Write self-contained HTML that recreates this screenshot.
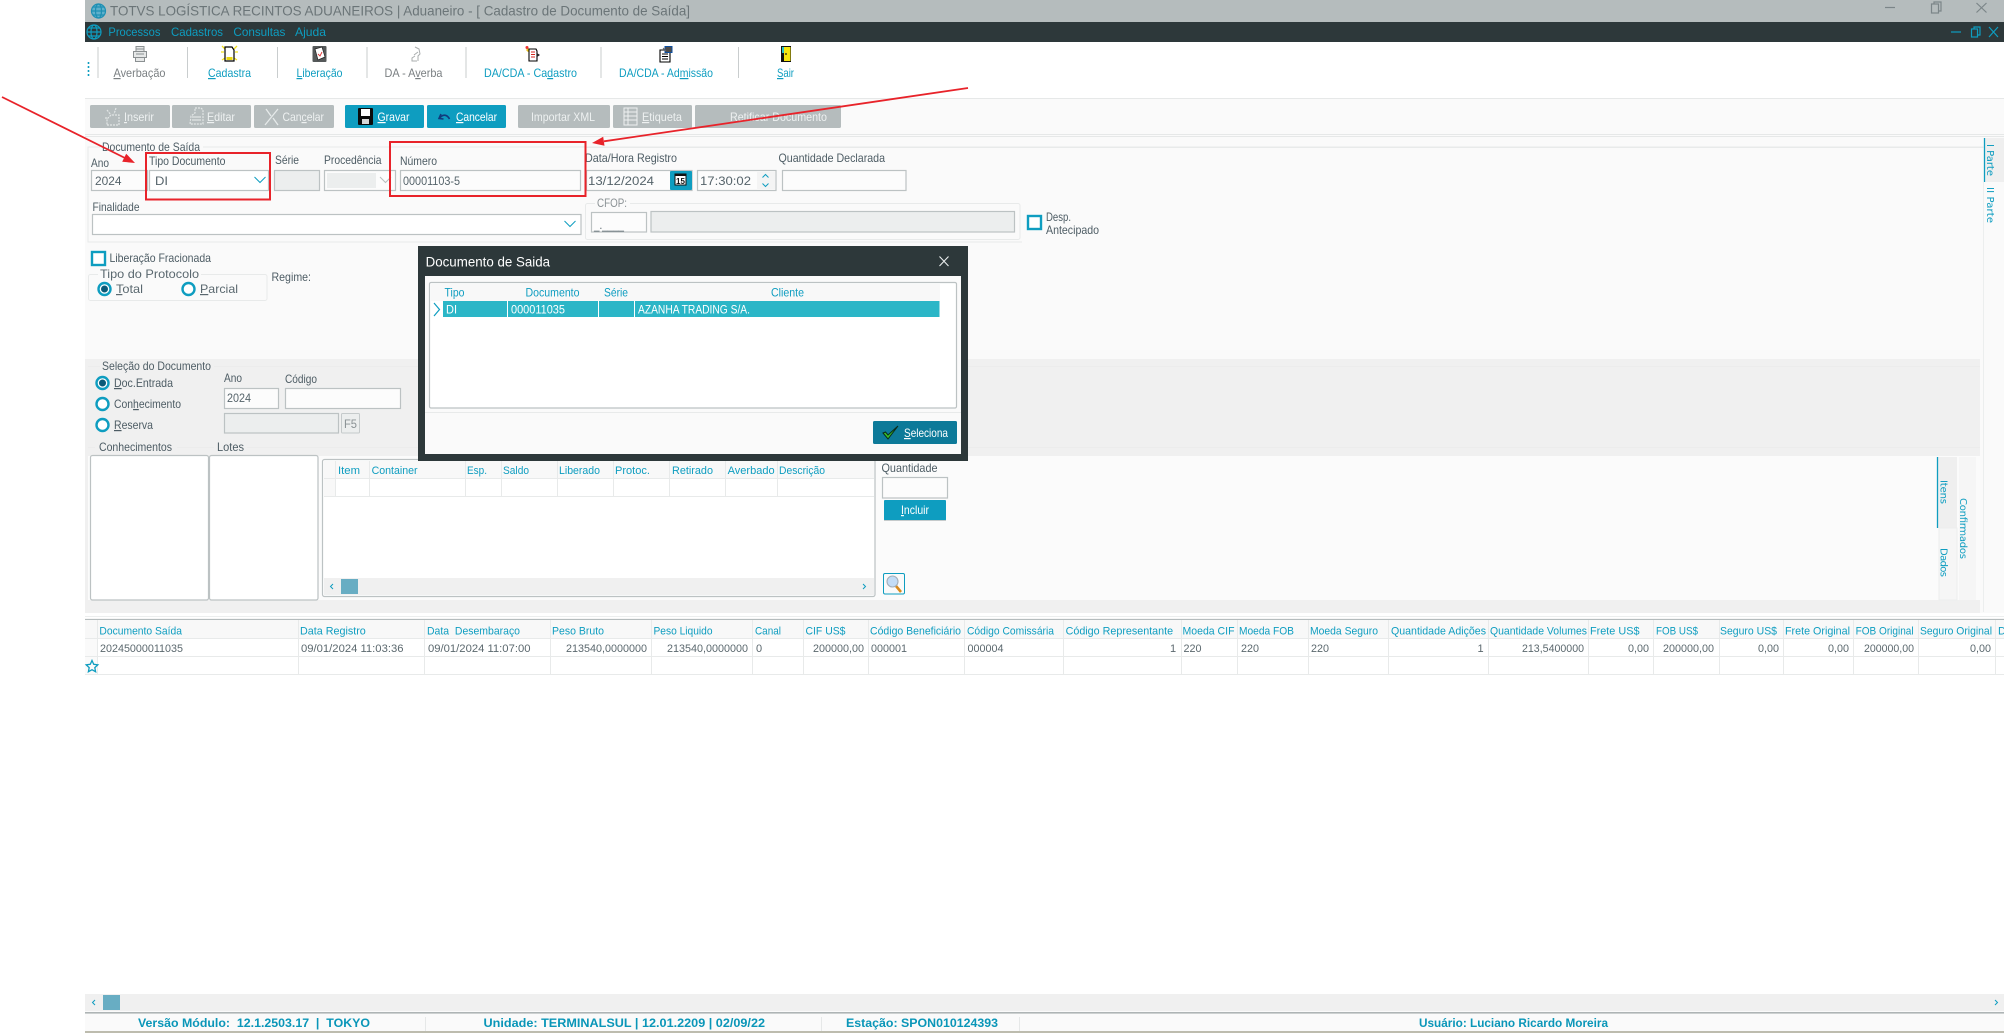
<!DOCTYPE html>
<html lang="pt-BR">
<head>
<meta charset="utf-8">
<title>Cadastro de Documento de Saída</title>
<style>
html,body{margin:0;padding:0;background:#fff;width:2004px;height:1033px;overflow:hidden}
svg{display:block;position:absolute;left:0;top:0}
text{font-family:"Liberation Sans",sans-serif;font-size:12px;white-space:pre}
.l{fill:#4d5c64}
.g{fill:#fff}
.b{fill:#0e9dc0}
.d{fill:#8a9194}
.f{font-size:11.5px;fill:#55636a}
.h{font-size:11px;fill:#0e9dc0}
.v{font-size:11px;fill:#5b686e}
.w{fill:#eef1f1}
.s{font-weight:bold;fill:#0a96b8;font-size:12px}
.r{font-family:"DejaVu Sans",sans-serif;font-size:10px;fill:#0e9dc0}
.bx{fill:#fcfcfc;stroke:#bcc2c3;stroke-width:1.2}
.dis{fill:#eceeee;stroke:#bcc2c3;stroke-width:1.2}
.ch{fill:none;stroke:#0e9dc0;stroke-width:1}
.gl{stroke:#e8eaea;stroke-width:1}
.rr{fill:#fff;stroke:#0e9dc0;stroke-width:2.4}
.red{fill:none;stroke:#e8232a;stroke-width:2}
</style>
</head>
<body>
<svg width="2004" height="1033" viewBox="0 0 2004 1033" xmlns="http://www.w3.org/2000/svg">
<rect width="2004" height="1033" fill="#fff"/>

<!-- title bar -->
<rect x="85" y="0" width="1919" height="22" fill="#b5bcbd"/>
<g fill="none" stroke="#1d8fb3" stroke-width="1.2"><circle cx="98.5" cy="11" r="7" fill="#5fb0cb"/><ellipse cx="98.5" cy="11" rx="3" ry="7"/><path d="M91.5 11h14M93 7h11M93 15h11"/></g>
<text x="110" y="15.5" style="font-size:14px;fill:#6b7578" textLength="580" lengthAdjust="spacingAndGlyphs">TOTVS LOGÍSTICA RECINTOS ADUANEIROS | Aduaneiro - [ Cadastro de Documento de Saída]</text>
<g fill="none" stroke="#7b8588" stroke-width="1.2"><path d="M1885 7.5h10"/><rect x="1931.5" y="4" width="7" height="9"/><path d="M1934 4v-2h7v9h-2"/><path d="M1976.500 3l10 9.500M1986.500 3l-10 9.500"/></g>

<!-- menu bar -->
<rect x="85" y="22" width="1919" height="20" fill="#2d383a"/>
<g fill="none" stroke="#0e9dc0" stroke-width="1.2"><circle cx="94" cy="32" r="7"/><ellipse cx="94" cy="32" rx="3" ry="7"/><path d="M87 32h14M88.5 28h11M88.500 36h11"/></g>
<text class="b" x="108.400" y="36" textLength="52" lengthAdjust="spacingAndGlyphs">Processos</text>
<text class="b" x="171" y="36" textLength="52" lengthAdjust="spacingAndGlyphs">Cadastros</text>
<text class="b" x="233.400" y="36" textLength="52" lengthAdjust="spacingAndGlyphs">Consultas</text>
<text class="b" x="295" y="36" textLength="31" lengthAdjust="spacingAndGlyphs">Ajuda</text>
<g fill="none" stroke="#0e9dc0" stroke-width="1.2"><path d="M1951 32h10"/><rect x="1971.500" y="29" width="6" height="8"/><path d="M1974 29v-2h6v8h-2"/><path d="M1989 27l9 10M1998 27l-9 10"/></g>

<!-- toolbar -->
<path d="M88.500 62v16" stroke="#0e9dc0" stroke-width="1.600" stroke-dasharray="2 2"/>
<g stroke="#c9cdce" stroke-width="1"><path d="M98 47v31M187.500 47v31M277.500 47v31M367 47v31M466 47v31M601 47v31M738.500 47v31"/></g>
<text x="113.500" y="77" style="fill:#7a7f82" textLength="52" lengthAdjust="spacingAndGlyphs"><tspan text-decoration="underline">A</tspan>verbação</text>
<text class="b" x="208" y="77" textLength="43" lengthAdjust="spacingAndGlyphs"><tspan text-decoration="underline">C</tspan>adastra</text>
<text class="b" x="296.500" y="77" textLength="46" lengthAdjust="spacingAndGlyphs"><tspan text-decoration="underline">L</tspan>iberação</text>
<text x="384.500" y="77" style="fill:#7a7f82" textLength="58" lengthAdjust="spacingAndGlyphs">DA - A<tspan text-decoration="underline">v</tspan>erba</text>
<text class="b" x="484" y="77" textLength="93" lengthAdjust="spacingAndGlyphs">DA/CDA - Ca<tspan text-decoration="underline">d</tspan>astro</text>
<text class="b" x="619" y="77" textLength="94" lengthAdjust="spacingAndGlyphs">DA/CDA - Ad<tspan text-decoration="underline">m</tspan>issão</text>
<text class="b" x="777" y="77" textLength="17" lengthAdjust="spacingAndGlyphs"><tspan text-decoration="underline">S</tspan>air</text>

<!-- toolbar icons -->
<g fill="#e6e8e8" stroke="#8b9092" stroke-width="1"><rect x="136" y="46.500" width="8" height="5"/><rect x="133.500" y="51.500" width="13" height="6"/><rect x="135.500" y="57.500" width="9" height="4"/><path d="M136 49h8M136 54h8" fill="none"/></g>
<g><path d="M222 46l3 3M237 46l-3 3M222 60l3-2M237 60l-3-2M221 52h3M238 52h-3" stroke="#f3e21c" stroke-width="1.300"/><path d="M225 47h7l2 3v11h-9z" fill="#fff" stroke="#000" stroke-width="1.200"/><rect x="226.500" y="57" width="6" height="3" fill="#e8d60f"/></g>
<g><rect x="312.500" y="46" width="14" height="16" rx="1" fill="#55595a"/><path d="M315 49l7-2 3 10-7 3z" fill="#fff" stroke="#222" stroke-width=".7"/><path d="M318 54l2 2 2-4" stroke="#d33" fill="none" stroke-width=".9"/></g>
<g fill="none" stroke="#a9adae" stroke-width="1"><path d="M415 47l4 2 1 5-2 2v5M415 56l-3 2v3h5M418 52l-4 3"/></g>
<g><path d="M528 48l3 2-3 2-2-2z" fill="#e9c21b"/><path d="M529 49h7l1 2v10h-8z" fill="#fff" stroke="#000" stroke-width="1.100"/><path d="M531 52h4M531 54.500h4M531 57h4" stroke="#d6281f"/><path d="M537 53l3 2-3 2z" fill="#222"/><circle cx="527" cy="47.500" r="1.500" fill="#e33"/></g>
<g><path d="M660 50h10v12h-10z" fill="#fff" stroke="#000" stroke-width="1.100"/><path d="M662 54h6M662 56.500h6M662 59h6" stroke="#000"/><rect x="665" y="46.500" width="7" height="6" fill="#4c4c4c" stroke="#0e4fa0"/><path d="M663 48l3 3" stroke="#666"/></g>
<g><rect x="781" y="46" width="10" height="16" fill="#111"/><rect x="784" y="47" width="6.500" height="14" fill="#f5e50f"/><rect x="782" y="47" width="2" height="6" fill="#27c0c4"/><circle cx="786" cy="54" r=".9" fill="#111"/></g>

<!-- band -->
<rect x="85" y="98" width="1919" height="935" fill="#fafafa"/>
<path d="M85 98.500h1919M85 134.500h1919M85 136.500h1919" stroke="#e6e8e8"/>

<!-- action buttons -->
<g fill="#b5bcbd"><rect x="90" y="105" width="80" height="23" rx="1.500"/><rect x="172" y="105" width="79" height="23" rx="1.500"/><rect x="254" y="105" width="80" height="23" rx="1.500"/><rect x="518" y="105" width="92" height="23" rx="1.500"/><rect x="613" y="105" width="79" height="23" rx="1.500"/><rect x="695" y="105" width="146" height="23" rx="1.500"/></g>
<g fill="#0e9dc0"><rect x="345" y="105" width="79" height="23" rx="1.500"/><rect x="427" y="105" width="79" height="23" rx="1.500"/></g>
<text class="w" x="124" y="121" textLength="30" lengthAdjust="spacingAndGlyphs"><tspan text-decoration="underline">I</tspan>nserir</text>
<text class="w" x="207" y="121" textLength="28" lengthAdjust="spacingAndGlyphs"><tspan text-decoration="underline">E</tspan>ditar</text>
<text class="w" x="282.500" y="121" textLength="41.500" lengthAdjust="spacingAndGlyphs">Can<tspan text-decoration="underline">c</tspan>elar</text>
<text class="g" x="377.500" y="121" textLength="32" lengthAdjust="spacingAndGlyphs"><tspan text-decoration="underline">G</tspan>ravar</text>
<text class="g" x="456" y="121" textLength="41" lengthAdjust="spacingAndGlyphs"><tspan text-decoration="underline">C</tspan>ancelar</text>
<text class="w" x="531" y="121" textLength="64" lengthAdjust="spacingAndGlyphs">Importar XML</text>
<text class="w" x="642" y="121" textLength="40" lengthAdjust="spacingAndGlyphs"><tspan text-decoration="underline">E</tspan>tiqueta</text>
<text class="w" x="730" y="121" textLength="97" lengthAdjust="spacingAndGlyphs">Retificar Documento</text>
<!-- button icons -->
<g fill="none" stroke="#e2e6e6" stroke-width="1.200"><path d="M107 110l4 5M116 108l-2 6M105 118h3M107 125h12v-10h-8l-4 4z" stroke-dasharray="2 1"/></g>
<g fill="none" stroke="#e2e6e6" stroke-width="1.200"><path d="M195 108h6l2 2v14h-13l1-8 4-3z" stroke-dasharray="2 1"/><path d="M192 117h9M192 120h9"/></g>
<g fill="none" stroke="#e6eaea" stroke-width="1.300"><path d="M265 125l13-16M266 109l5 7M273 118l5 7"/></g>
<g><rect x="358" y="108" width="15" height="17" rx="1" fill="#0b0b0b"/><rect x="361" y="109" width="9" height="7" fill="#fff"/><rect x="362" y="119" width="7" height="5" fill="#d8d8d8"/></g>
<g fill="none" stroke="#123a7c" stroke-width="1.600"><path d="M441 114l-2 4.500 4.500.5"/><path d="M439.500 118.500c2.500-4 7-5 10 .5"/></g>
<g fill="#d7dcdc" stroke="#eef1f1" stroke-width="1"><rect x="624" y="108" width="13" height="17" fill="none"/><path d="M624 112h13M624 116h13M624 120h13M628 108v17"/></g>

<!-- Documento de Saída fieldset -->
<rect x="88" y="147" width="1895" height="95" fill="none" stroke="#e8eaea"/>
<rect x="1022" y="148" width="965" height="120" fill="#fafafa"/>
<path d="M586 147.500h1397" stroke="#e8eaea"/>
<rect x="100" y="140" width="103" height="14" fill="#fafafa"/>
<text class="l" x="102" y="151" textLength="98" lengthAdjust="spacingAndGlyphs">Documento de Saída</text>

<text class="l" x="91" y="167" textLength="18" lengthAdjust="spacingAndGlyphs">Ano</text>
<rect class="bx" x="91.500" y="170.500" width="56" height="20"/>
<text class="f" x="95" y="185" textLength="26.500" lengthAdjust="spacingAndGlyphs">2024</text>

<rect class="bx" x="149.500" y="170.500" width="119" height="20" style="fill:#fff"/>
<text class="l" x="149" y="165" textLength="76.500" lengthAdjust="spacingAndGlyphs">Tipo Documento</text>
<text class="f" x="155" y="185" textLength="13" lengthAdjust="spacingAndGlyphs">DI</text>
<path class="ch" d="M254.500 177l5.500 5.500 5.500-5.500"/>

<text class="l" x="275" y="164" textLength="24" lengthAdjust="spacingAndGlyphs">Série</text>
<rect class="dis" x="274.500" y="170.500" width="45" height="20"/>

<text class="l" x="324" y="164" textLength="57.500" lengthAdjust="spacingAndGlyphs">Procedência</text>
<rect class="bx" x="324.500" y="170.500" width="71" height="20"/>
<rect x="327" y="173" width="49" height="15" fill="#eceeee"/>
<path d="M380 177l5.500 5.500 5.500-5.500" fill="none" stroke="#b8bdbe"/>

<text class="l" x="400" y="165" textLength="37" lengthAdjust="spacingAndGlyphs">Número</text>
<rect class="bx" x="400.500" y="170.500" width="180" height="20"/>
<text class="f" x="403" y="185" textLength="57" lengthAdjust="spacingAndGlyphs">00001103-5</text>

<text class="l" x="585" y="162" textLength="92" lengthAdjust="spacingAndGlyphs">Data/Hora Registro</text>
<rect class="bx" x="586.500" y="170.500" width="105.500" height="20"/>
<text class="f" x="588" y="185" textLength="66" lengthAdjust="spacingAndGlyphs">13/12/2024</text>
<rect x="670" y="171" width="22" height="19" fill="#0e9dc0" rx="1"/>
<rect x="675" y="174" width="11" height="11" fill="#fff" stroke="#111" stroke-width="1"/>
<rect x="675" y="174" width="11" height="2" fill="#111"/>
<text x="676" y="184" style="font-size:8px;font-weight:bold;fill:#111" textLength="9">15</text>

<rect class="bx" x="697.500" y="170.500" width="78.500" height="20"/>
<text class="f" x="700" y="185" textLength="51" lengthAdjust="spacingAndGlyphs">17:30:02</text>
<rect x="757" y="172" width="18" height="17" fill="#f4f4f4"/>
<path class="ch" d="M762.500 177.500l3-3 3 3M762.500 183.500l3 3 3-3"/>

<text class="l" x="778.500" y="162" textLength="106.500" lengthAdjust="spacingAndGlyphs">Quantidade Declarada</text>
<rect class="bx" x="782.500" y="170.500" width="123.500" height="20"/>

<text class="l" x="92.500" y="211" textLength="47" lengthAdjust="spacingAndGlyphs">Finalidade</text>
<rect class="bx" x="92.500" y="214.500" width="488.500" height="20" style="fill:#fff"/>
<path class="ch" d="M564.500 221l5.500 5.500 5.500-5.500"/>

<rect x="585.500" y="203.500" width="434.500" height="36" rx="2" fill="#fafafa" stroke="#e8eaea"/>
<rect x="595" y="198" width="35" height="11" fill="#fafafa"/>
<text class="d" x="597" y="207" textLength="30" lengthAdjust="spacingAndGlyphs">CFOP:</text>
<rect class="bx" x="591.500" y="212.500" width="55" height="19.500"/>
<text class="f" x="594" y="229" textLength="30" lengthAdjust="spacingAndGlyphs">_.____</text>
<rect class="dis" x="651" y="211.500" width="363.500" height="20.500"/>

<rect x="1028" y="216" width="13" height="13" fill="#fff" stroke="#0e9dc0" stroke-width="2.400"/>
<text class="l" x="1046" y="221" textLength="25" lengthAdjust="spacingAndGlyphs">Desp.</text>
<text class="l" x="1046" y="234" textLength="53" lengthAdjust="spacingAndGlyphs">Antecipado</text>

<!-- right main tabs -->
<rect x="1984" y="138" width="20" height="44" fill="#efefef"/>
<path d="M1984.500 138v44" stroke="#0e9dc0" stroke-width="1.300"/>
<path d="M1983.500 182v430" stroke="#eceeee"/>
<text class="r" transform="translate(1987,144) rotate(90)" textLength="32">I Parte</text>
<text class="r" transform="translate(1987,187) rotate(90)" textLength="36">II Parte</text>

<!-- Liberação / protocolo -->
<rect x="92" y="252" width="13" height="13" fill="#fff" stroke="#0e9dc0" stroke-width="2.400"/>
<text class="l" x="109.500" y="262" textLength="101.500" lengthAdjust="spacingAndGlyphs">Liberação Fracionada</text>
<rect x="88.500" y="274.500" width="178.500" height="26" rx="2" fill="none" stroke="#e8eaea"/>
<rect x="98" y="268" width="103" height="12" fill="#fafafa"/>
<text x="100" y="278" style="fill:#5a686f" textLength="99" lengthAdjust="spacingAndGlyphs">Tipo do Protocolo</text>
<circle class="rr" cx="104.500" cy="289" r="6"/><circle cx="104.500" cy="289" r="3.500" fill="#0a5a78"/>
<text x="116" y="293" style="fill:#5a686f" textLength="27" lengthAdjust="spacingAndGlyphs"><tspan text-decoration="underline">T</tspan>otal</text>
<circle class="rr" cx="188.500" cy="289" r="6"/>
<text x="200" y="293" style="fill:#5a686f" textLength="38" lengthAdjust="spacingAndGlyphs"><tspan text-decoration="underline">P</tspan>arcial</text>
<text class="l" x="271.500" y="281" textLength="39.500" lengthAdjust="spacingAndGlyphs">Regime:</text>

<!-- gray selection area -->
<rect x="85" y="359" width="1895" height="254" fill="#f0f0f0"/>
<path d="M88 366.500h1892M88 447.500h1892" stroke="#ececec"/>
<rect x="88" y="456" width="1892" height="144" fill="#fbfbfb"/>
<rect x="100" y="360" width="114" height="12" fill="#f0f0f0"/>
<text class="l" x="102" y="370" textLength="109" lengthAdjust="spacingAndGlyphs">Seleção do Documento</text>
<circle class="rr" cx="102.500" cy="383" r="6"/><circle cx="102.500" cy="383" r="3.500" fill="#0a5a78"/>
<text class="l" x="114" y="387" textLength="59" lengthAdjust="spacingAndGlyphs"><tspan text-decoration="underline">D</tspan>oc.Entrada</text>
<circle class="rr" cx="102.500" cy="404" r="6"/>
<text class="l" x="114" y="408" textLength="67" lengthAdjust="spacingAndGlyphs">Con<tspan text-decoration="underline">h</tspan>ecimento</text>
<circle class="rr" cx="102.500" cy="425" r="6"/>
<text class="l" x="114" y="429" textLength="39" lengthAdjust="spacingAndGlyphs"><tspan text-decoration="underline">R</tspan>eserva</text>
<text class="l" x="224" y="382" textLength="18" lengthAdjust="spacingAndGlyphs">Ano</text>
<text class="l" x="285" y="383" textLength="32" lengthAdjust="spacingAndGlyphs">Código</text>
<rect class="bx" x="224.500" y="388.500" width="54" height="20"/>
<text class="f" x="227" y="402" textLength="24" lengthAdjust="spacingAndGlyphs">2024</text>
<rect class="bx" x="285.500" y="388.500" width="115" height="20"/>
<rect class="dis" x="224.500" y="413.500" width="114" height="19.500"/>
<rect x="341.500" y="413.500" width="18" height="19.500" rx="1" fill="#eceeee" stroke="#c5cacb"/>
<text class="d" x="344" y="428" textLength="13" lengthAdjust="spacingAndGlyphs">F5</text>
<rect x="95" y="441" width="82" height="12" fill="#f0f0f0"/><rect x="214" y="441" width="33" height="12" fill="#f0f0f0"/>
<text class="l" x="99" y="451" textLength="73" lengthAdjust="spacingAndGlyphs">Conhecimentos</text>
<text class="l" x="217" y="451" textLength="27" lengthAdjust="spacingAndGlyphs">Lotes</text>
<rect x="90.500" y="455.500" width="118" height="144.500" rx="2" fill="#fff" stroke="#bcc2c3" stroke-width="1.200"/>
<rect x="209.500" y="455.500" width="108.500" height="144.500" rx="2" fill="#fff" stroke="#bcc2c3" stroke-width="1.200"/>

<!-- items grid -->
<rect x="322.500" y="459.500" width="552.500" height="137" rx="2" fill="#fff" stroke="#bcc2c3" stroke-width="1.200"/>
<rect x="324" y="461" width="550" height="17" fill="#f8f8f8"/>
<rect x="324" y="479" width="12" height="17" fill="#f8f8f8"/>
<path class="gl" d="M324 478.500h550M324 496.500h550M335.500 461v35M369.500 461v35M465.500 461v35M501.500 461v35M557.500 461v35M613.500 461v35M669.500 461v35M725.500 461v35M777.500 461v35"/>
<text class="h" x="338" y="474" textLength="22" lengthAdjust="spacingAndGlyphs">Item</text>
<text class="h" x="371.600" y="474" textLength="46" lengthAdjust="spacingAndGlyphs">Container</text>
<text class="h" x="467" y="474" textLength="20" lengthAdjust="spacingAndGlyphs">Esp.</text>
<text class="h" x="503" y="474" textLength="26" lengthAdjust="spacingAndGlyphs">Saldo</text>
<text class="h" x="559" y="474" textLength="41" lengthAdjust="spacingAndGlyphs">Liberado</text>
<text class="h" x="615" y="474" textLength="35" lengthAdjust="spacingAndGlyphs">Protoc.</text>
<text class="h" x="672" y="474" textLength="41" lengthAdjust="spacingAndGlyphs">Retirado</text>
<text class="h" x="727.600" y="474" textLength="47" lengthAdjust="spacingAndGlyphs">Averbado</text>
<text class="h" x="779" y="474" textLength="46" lengthAdjust="spacingAndGlyphs">Descrição</text>
<rect x="324" y="578" width="550" height="17" fill="#f0f0f0"/>
<rect x="341" y="579" width="17" height="15" fill="#68adc3"/>
<path class="ch" d="M333 584l-2.500 2.500 2.500 2.500M863 584l2.500 2.500-2.500 2.500"/>

<text class="l" x="881.500" y="472" textLength="56" lengthAdjust="spacingAndGlyphs">Quantidade</text>
<rect class="bx" x="882.500" y="477.500" width="65" height="20.500"/>
<rect x="884" y="500" width="62" height="20.500" rx="1" fill="#0e9dc0"/>
<path d="M884 520.500h62" stroke="#c5cacb" stroke-width="1"/>
<text class="g" x="901" y="514" textLength="28" lengthAdjust="spacingAndGlyphs"><tspan text-decoration="underline">I</tspan>ncluir</text>
<rect x="883.500" y="573.500" width="21" height="20.500" rx="1.500" fill="#fafafa" stroke="#0e9dc0" stroke-width="1"/>
<path d="M896 586l5 6" stroke="#d88a1c" stroke-width="2.600"/>
<circle cx="892.500" cy="581.500" r="5.500" fill="#c3dcf5" stroke="#a3aeb8" stroke-width="1.100"/>

<!-- inner tabs -->
<rect x="1937" y="457" width="20" height="71" fill="#efefef"/>
<path d="M1937.500 457v71" stroke="#0e9dc0" stroke-width="1.300"/>
<rect x="1939" y="528" width="18" height="72" fill="#f6f6f6" stroke="#eceeee"/>
<rect x="1959" y="457" width="17" height="143" fill="#f6f6f6"/>
<text class="r" transform="translate(1940.500,480) rotate(90)" textLength="24">Itens</text>
<text class="r" transform="translate(1940.500,548) rotate(90)" textLength="29">Dados</text>
<text class="r" transform="translate(1960,498) rotate(90)" textLength="61">Confirmados</text>

<!-- main grid -->
<rect x="85" y="613" width="1919" height="381" fill="#fff"/>
<path d="M85 616.500h1919" stroke="#eceeee"/>
<path d="M85 619.500h1919" stroke="#b5bcbd" stroke-width="1.300"/>
<rect x="85" y="620" width="1919" height="18" fill="#f8f8f8"/>
<rect x="85" y="638" width="12" height="36" fill="#fafafa"/>
<path class="gl" d="M85 638.500h1919M85 656.500h1919M85 674.500h1919"/>
<path class="gl" d="M97.500 620v54M298.500 620v54M424.500 620v54M550.500 620v54M651.500 620v54M752.500 620v54M803.500 620v54M868.500 620v54M964.500 620v54M1063.500 620v54M1181.500 620v54M1237.500 620v54M1308.500 620v54M1388.500 620v54M1488.500 620v54M1588.500 620v54M1653.500 620v54M1719.500 620v54M1783.500 620v54M1853.500 620v54M1918.500 620v54M1995.500 620v54"/>
<text class="h" x="99.400" y="634.500" textLength="82.600" lengthAdjust="spacingAndGlyphs">Documento Saída</text>
<text class="h" x="300" y="634.500" textLength="65.800" lengthAdjust="spacingAndGlyphs">Data Registro</text>
<text class="h" x="427" y="634.500" textLength="93" lengthAdjust="spacingAndGlyphs">Data  Desembaraço</text>
<text class="h" x="552" y="634.500" textLength="52" lengthAdjust="spacingAndGlyphs">Peso Bruto</text>
<text class="h" x="653.500" y="634.500" textLength="59" lengthAdjust="spacingAndGlyphs">Peso Liquido</text>
<text class="h" x="755" y="634.500" textLength="26" lengthAdjust="spacingAndGlyphs">Canal</text>
<text class="h" x="805.500" y="634.500" textLength="40" lengthAdjust="spacingAndGlyphs">CIF US$</text>
<text class="h" x="870" y="634.500" textLength="91" lengthAdjust="spacingAndGlyphs">Código Beneficiário</text>
<text class="h" x="967" y="634.500" textLength="87" lengthAdjust="spacingAndGlyphs">Código Comissária</text>
<text class="h" x="1065.600" y="634.500" textLength="107.500" lengthAdjust="spacingAndGlyphs">Código Representante</text>
<text class="h" x="1182.500" y="634.500" textLength="52" lengthAdjust="spacingAndGlyphs">Moeda CIF</text>
<text class="h" x="1239" y="634.500" textLength="55" lengthAdjust="spacingAndGlyphs">Moeda FOB</text>
<text class="h" x="1310" y="634.500" textLength="68" lengthAdjust="spacingAndGlyphs">Moeda Seguro</text>
<text class="h" x="1391" y="634.500" textLength="95" lengthAdjust="spacingAndGlyphs">Quantidade Adições</text>
<text class="h" x="1490" y="634.500" textLength="97" lengthAdjust="spacingAndGlyphs">Quantidade Volumes</text>
<text class="h" x="1590" y="634.500" textLength="49.500" lengthAdjust="spacingAndGlyphs">Frete US$</text>
<text class="h" x="1656" y="634.500" textLength="42" lengthAdjust="spacingAndGlyphs">FOB US$</text>
<text class="h" x="1720" y="634.500" textLength="57" lengthAdjust="spacingAndGlyphs">Seguro US$</text>
<text class="h" x="1785" y="634.500" textLength="65" lengthAdjust="spacingAndGlyphs">Frete Original</text>
<text class="h" x="1855.600" y="634.500" textLength="58" lengthAdjust="spacingAndGlyphs">FOB Original</text>
<text class="h" x="1920" y="634.500" textLength="72" lengthAdjust="spacingAndGlyphs">Seguro Original</text>
<text class="h" x="1998" y="634.500">D</text>

<text class="v" x="100" y="652" textLength="83" lengthAdjust="spacingAndGlyphs">20245000011035</text>
<text class="v" x="301" y="652" textLength="102.500" lengthAdjust="spacingAndGlyphs">09/01/2024 11:03:36</text>
<text class="v" x="428" y="652" textLength="102.500" lengthAdjust="spacingAndGlyphs">09/01/2024 11:07:00</text>
<text class="v" x="566" y="652" textLength="81" lengthAdjust="spacingAndGlyphs">213540,0000000</text>
<text class="v" x="667" y="652" textLength="81" lengthAdjust="spacingAndGlyphs">213540,0000000</text>
<text class="v" x="756" y="652">0</text>
<text class="v" x="813" y="652" textLength="51" lengthAdjust="spacingAndGlyphs">200000,00</text>
<text class="v" x="871" y="652" textLength="36" lengthAdjust="spacingAndGlyphs">000001</text>
<text class="v" x="967.500" y="652" textLength="36" lengthAdjust="spacingAndGlyphs">000004</text>
<text class="v" x="1170" y="652">1</text>
<text class="v" x="1183.500" y="652" textLength="18" lengthAdjust="spacingAndGlyphs">220</text>
<text class="v" x="1241" y="652" textLength="18" lengthAdjust="spacingAndGlyphs">220</text>
<text class="v" x="1311" y="652" textLength="18" lengthAdjust="spacingAndGlyphs">220</text>
<text class="v" x="1477.500" y="652">1</text>
<text class="v" x="1522" y="652" textLength="62" lengthAdjust="spacingAndGlyphs">213,5400000</text>
<text class="v" x="1628" y="652" textLength="21" lengthAdjust="spacingAndGlyphs">0,00</text>
<text class="v" x="1663" y="652" textLength="51" lengthAdjust="spacingAndGlyphs">200000,00</text>
<text class="v" x="1758" y="652" textLength="21" lengthAdjust="spacingAndGlyphs">0,00</text>
<text class="v" x="1828" y="652" textLength="21" lengthAdjust="spacingAndGlyphs">0,00</text>
<text class="v" x="1864" y="652" textLength="50" lengthAdjust="spacingAndGlyphs">200000,00</text>
<text class="v" x="1970" y="652" textLength="21" lengthAdjust="spacingAndGlyphs">0,00</text>
<path d="M92 660.500l1.700 3.800 4.100.5-3 2.800.8 4.100-3.600-2-3.600 2 .8-4.100-3-2.800 4.100-.5z" fill="none" stroke="#0e9dc0" stroke-width="1.300"/>

<!-- bottom scrollbar and status -->
<rect x="85" y="994" width="1919" height="17" fill="#f0f0f0"/>
<rect x="103" y="995" width="17" height="15" fill="#68adc3"/>
<path class="ch" d="M95 1000l-2.500 2.500 2.500 2.500M1995 1000l2.500 2.500-2.500 2.500"/>
<rect x="85" y="1012" width="1919" height="1.600" fill="#aeb4b5"/>
<rect x="85" y="1014" width="1919" height="17" fill="#fafafa"/>
<rect x="85" y="1031" width="1919" height="2" fill="#bdbcae"/>
<path d="M425.500 1017v14M821.500 1017v14M1019.500 1017v14" stroke="#e6e8e8"/>
<text class="s" x="138" y="1027" textLength="232" lengthAdjust="spacingAndGlyphs">Versão Módulo:  12.1.2503.17  |  TOKYO</text>
<text class="s" x="483.500" y="1027" textLength="281.500" lengthAdjust="spacingAndGlyphs">Unidade: TERMINALSUL | 12.01.2209 | 02/09/22</text>
<text class="s" x="846" y="1027" textLength="152" lengthAdjust="spacingAndGlyphs">Estação: SPON010124393</text>
<text class="s" x="1419" y="1027" textLength="189" lengthAdjust="spacingAndGlyphs">Usuário: Luciano Ricardo Moreira</text>

<!-- red annotations -->
<rect class="red" x="146" y="153" width="124" height="46.500"/>
<rect class="red" x="390" y="142" width="195.500" height="54"/>

<!-- dialog -->
<rect x="418" y="246" width="550" height="215" fill="#2d383a"/>
<text class="g" x="425.600" y="266.500" style="font-size:13.500px" textLength="124.500" lengthAdjust="spacingAndGlyphs">Documento de Saida</text>
<path d="M939.500 256.500l9 9.500M948.500 256.500l-9 9.500" stroke="#e8ecec" stroke-width="1.100"/>
<rect x="425" y="276" width="536" height="178" fill="#fafafa"/>
<rect x="429.500" y="282.500" width="527" height="125.500" rx="1.500" fill="#fff" stroke="#bcc2c3" stroke-width="1.200"/>
<rect x="431" y="284" width="509" height="17" fill="#f8f8f8"/>
<text class="h" x="444.500" y="296.500" style="font-size:12px" textLength="20" lengthAdjust="spacingAndGlyphs">Tipo</text>
<text class="h" x="525.500" y="296.500" style="font-size:12px" textLength="54" lengthAdjust="spacingAndGlyphs">Documento</text>
<text class="h" x="604" y="296.500" style="font-size:12px" textLength="24" lengthAdjust="spacingAndGlyphs">Série</text>
<text class="h" x="771" y="296.500" style="font-size:12px" textLength="33" lengthAdjust="spacingAndGlyphs">Cliente</text>
<rect x="443" y="301" width="496.500" height="16" fill="#2bb6c7"/>
<path d="M507.500 301v16M598.500 301v16M634.500 301v16" stroke="#fff"/>
<path d="M434 303l5.500 6.500-5.500 6.500" fill="none" stroke="#0e9dc0" stroke-width="1.200"/>
<text class="g" x="446" y="313.500" style="font-size:11.500px" textLength="11" lengthAdjust="spacingAndGlyphs">DI</text>
<text class="g" x="511" y="313.500" style="font-size:11.500px" textLength="54" lengthAdjust="spacingAndGlyphs">000011035</text>
<text class="g" x="638" y="313.500" style="font-size:11.500px" textLength="112" lengthAdjust="spacingAndGlyphs">AZANHA TRADING S/A.</text>
<path d="M425 412.500h536" stroke="#e8eaea"/>
<rect x="873" y="421" width="84" height="23" rx="1.500" fill="#0d7a99"/>
<path d="M883 433l5 6 10-13-10 9-2.500-3z" fill="#37c22b" stroke="#0b2c18" stroke-width="1"/>
<text class="g" x="904" y="437" textLength="44" lengthAdjust="spacingAndGlyphs"><tspan text-decoration="underline">S</tspan>eleciona</text>

<!-- arrows -->
<path d="M2 97L125 158" stroke="#e8232a" stroke-width="1.800" fill="none"/>
<path d="M135 163L122.200 161.700L126.200 153.700Z" fill="#e8232a"/>
<path d="M968 88L604 141.300" stroke="#e8232a" stroke-width="1.800" fill="none"/>
<path d="M592 143L604.500 145.700L603.200 136.800Z" fill="#e8232a"/>
</svg>
</body>
</html>
